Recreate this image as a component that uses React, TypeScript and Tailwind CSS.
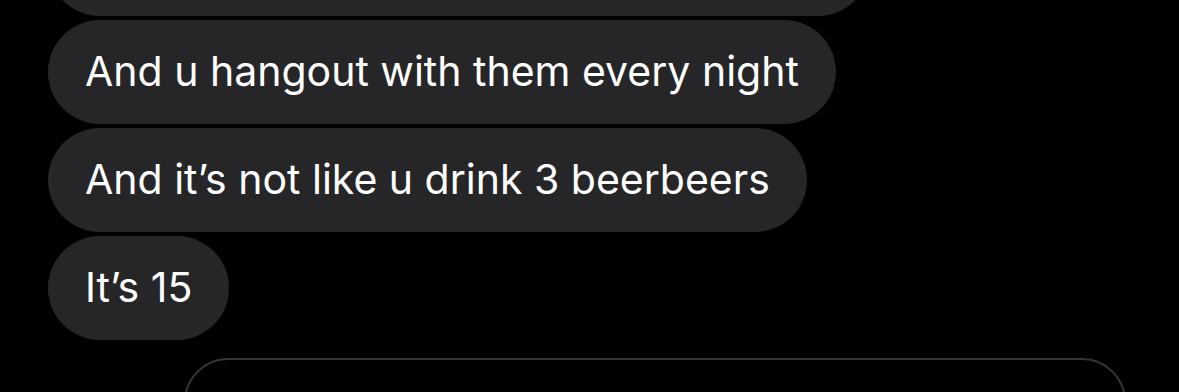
const messages = [
  "And u hangout with them every night",
  "And it’s not like u drink 3 beerbeers",
  "It’s 15",
];

const Bubble = ({ text }: { text: string }) => (
  <div className="self-start h-[104px] flex items-center px-[37px] rounded-full bg-[#262628] text-white text-[41px]">
    {text}
  </div>
);

export default function App() {
  return (
    <div className="w-[1179px] h-[392px] overflow-hidden bg-black font-['Inter',sans-serif]">
      <div className="flex flex-col gap-1 pl-12">
        {/* previous bubble, mostly scrolled out of view */}
        <div className="w-[822px] h-[104px] -mt-[88px] rounded-full bg-[#262628]" />
        {messages.map((m) => (
          <Bubble key={m} text={m} />
        ))}
      </div>
      <div className="ml-[184px] mt-[18px] w-[942px] h-[90px] rounded-[44px] border-2 border-[#363638]" />
    </div>
  );
}
